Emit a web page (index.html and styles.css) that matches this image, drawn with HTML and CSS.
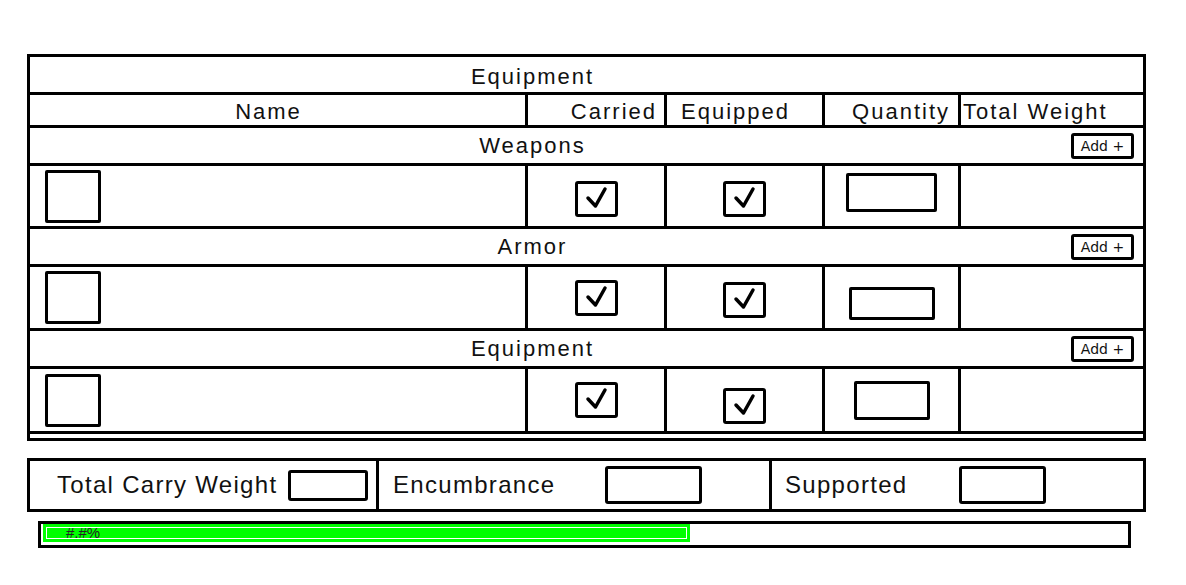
FILE: index.html
```html
<!DOCTYPE html>
<html lang="en">
<head>
  <meta charset="UTF-8" />
  <meta name="viewport" content="width=device-width, initial-scale=1.0"/>
  <title>Equipment</title>
  <link rel="stylesheet" href="styles.css">
</head>
<body>

  <div class="sheet">
    <div class="equip-table">
      <div class="title-row">Equipment</div>

      <div class="head head-name">Name</div>
      <div class="head head-carried">Carried</div>
      <div class="head head-equipped">Equipped</div>
      <div class="head head-qty">Quantity</div>
      <div class="head head-weight">Total Weight</div>

      <!-- Weapons -->
      <div class="section">
        <span class="section-label">Weapons</span>
        <button class="add-btn">Add +</button>
      </div>
      <div class="cell cell-name"><span class="name-box"></span></div>
      <div class="cell cell-low">
        <svg class="check" width="43" height="36" viewBox="0 0 43 36"><rect x="1.5" y="1.5" width="40" height="33" rx="1.5"/><path d="M13 17 L20.5 25 L30 8"/></svg>
      </div>
      <div class="cell cell-low">
        <svg class="check" width="43" height="36" viewBox="0 0 43 36"><rect x="1.5" y="1.5" width="40" height="33" rx="1.5"/><path d="M13 17 L20.5 25 L30 8"/></svg>
      </div>
      <div class="cell cell-high"><span class="qty-box"></span></div>
      <div class="cell"></div>

      <!-- Armor -->
      <div class="section">
        <span class="section-label">Armor</span>
        <button class="add-btn">Add +</button>
      </div>
      <div class="cell cell-name"><span class="name-box"></span></div>
      <div class="cell">
        <svg class="check" width="43" height="36" viewBox="0 0 43 36"><rect x="1.5" y="1.5" width="40" height="33" rx="1.5"/><path d="M13 17 L20.5 25 L30 8"/></svg>
      </div>
      <div class="cell cell-low">
        <svg class="check" width="43" height="36" viewBox="0 0 43 36"><rect x="1.5" y="1.5" width="40" height="33" rx="1.5"/><path d="M13 17 L20.5 25 L30 8"/></svg>
      </div>
      <div class="cell cell-lower"><span class="qty-box qty-short"></span></div>
      <div class="cell"></div>

      <!-- Equipment -->
      <div class="section">
        <span class="section-label">Equipment</span>
        <button class="add-btn">Add +</button>
      </div>
      <div class="cell cell-name"><span class="name-box"></span></div>
      <div class="cell">
        <svg class="check" width="43" height="36" viewBox="0 0 43 36"><rect x="1.5" y="1.5" width="40" height="33" rx="1.5"/><path d="M13 17 L20.5 25 L30 8"/></svg>
      </div>
      <div class="cell cell-lower">
        <svg class="check" width="43" height="36" viewBox="0 0 43 36"><rect x="1.5" y="1.5" width="40" height="33" rx="1.5"/><path d="M13 17 L20.5 25 L30 8"/></svg>
      </div>
      <div class="cell"><span class="qty-box qty-narrow"></span></div>
      <div class="cell"></div>

      <div class="spacer"></div>
    </div>

    <div class="totals">
      <div class="total-cell">
        <span class="total-label label-carry">Total Carry Weight</span>
        <span class="total-box box-carry"></span>
      </div>
      <div class="total-cell">
        <span class="total-label label-enc">Encumbrance</span>
        <span class="total-box box-enc"></span>
      </div>
      <div class="total-cell">
        <span class="total-label label-sup">Supported</span>
        <span class="total-box box-sup"></span>
      </div>
    </div>

    <div class="load-bar">
      <div class="load-fill" style="width: 59.7%;">#.#%</div>
    </div>
  </div>

</body>
</html>
```

FILE: styles.css
```css
* {
  box-sizing: border-box;
}

body {
  margin: 0;
  padding: 0;
  background: #fff;
  color: #111;
  font-family: 'Liberation Sans', Arial, sans-serif;
}

.sheet {
  padding: 54px 0 0 27px;
  width: 1160px;
}

/* main table: black background shows through the gaps as grid lines */
.equip-table {
  display: grid;
  width: 1119px;
  grid-template-columns: 495px 136px 155px 133px 182px;
  grid-template-rows: 35px 30px 35px 60px 35px 61px 35px 62px 4px;
  gap: 3px;
  padding: 3px;
  background: #000;
}

.equip-table > div {
  background: #fff;
}

.title-row {
  grid-column: 1 / -1;
  text-align: center;
  padding: 4px 108px 0 0;
  font-size: 22px;
  letter-spacing: 2px;
  line-height: 32px;
}

.head {
  font-size: 22px;
  letter-spacing: 2px;
  padding-top: 3px;
  line-height: 27px;
  white-space: nowrap;
}

.head-name {
  text-align: center;
  padding-right: 18px;
}

.head-carried {
  text-align: right;
  padding-right: 7px;
}

.head-equipped {
  padding-left: 14px;
}

.head-qty {
  text-align: right;
  padding-right: 8px;
}

.head-weight {
  padding-left: 2px;
}

.section {
  grid-column: 1 / -1;
  display: grid;
  grid-template-columns: 1fr 108px;
  align-items: center;
}

.section-label {
  text-align: center;
  font-size: 22px;
  letter-spacing: 2px;
  line-height: 35px;
}

.add-btn {
  justify-self: end;
  margin-right: 9px;
  width: 63px;
  height: 26px;
  padding: 0;
  border: 3px solid #000;
  border-radius: 3px;
  background: #fff;
  color: #111;
  font-family: 'DejaVu Sans', sans-serif;
  font-size: 14px;
  line-height: 20px;
  cursor: pointer;
}

.cell {
  display: flex;
  align-items: center;
  justify-content: center;
}

.cell-low {
  padding-top: 5px;
}

.cell-lower {
  padding-top: 11px;
}

.cell-high {
  padding-bottom: 7px;
}

.cell-name {
  justify-content: flex-start;
  padding-left: 15px;
}

.name-box {
  width: 56px;
  height: 53px;
  border: 3px solid #000;
  border-radius: 2px;
}

.check rect {
  fill: #fff;
  stroke: #000;
  stroke-width: 3;
}

.check path {
  fill: none;
  stroke: #000;
  stroke-width: 3.5;
  stroke-linecap: round;
  stroke-linejoin: round;
}

.qty-box {
  width: 91px;
  height: 39px;
  border: 3px solid #000;
  border-radius: 2px;
}

.qty-short {
  width: 86px;
  height: 33px;
}

.qty-narrow {
  width: 76px;
}

.spacer {
  grid-column: 1 / -1;
}

/* totals strip */
.totals {
  display: grid;
  width: 1119px;
  margin-top: 17px;
  grid-template-columns: 346px 390px 371px;
  grid-template-rows: 48px;
  gap: 3px;
  padding: 3px;
  background: #000;
}

.total-cell {
  display: flex;
  align-items: center;
  background: #fff;
}

.total-label {
  font-size: 24px;
  letter-spacing: 1.3px;
  white-space: nowrap;
  flex-shrink: 0;
}

.label-carry {
  width: 258px;
  padding-left: 27px;
}

.label-enc {
  width: 226px;
  padding-left: 14px;
}

.label-sup {
  width: 187px;
  padding-left: 13px;
}

.total-box {
  border: 3px solid #000;
  border-radius: 3px;
}

.box-carry {
  width: 80px;
  height: 31px;
}

.box-enc {
  width: 97px;
  height: 38px;
}

.box-sup {
  width: 87px;
  height: 38px;
}

/* load bar */
.load-bar {
  margin: 9px 0 0 11px;
  width: 1093px;
  height: 27px;
  border: 3px solid #000;
  padding: 0 2px;
}

.load-fill {
  height: 18px;
  background: #00ff00;
  outline: 1px solid #fff;
  outline-offset: -4px;
  padding-left: 23px;
  font-size: 15px;
  line-height: 18px;
  color: #222;
}
```
